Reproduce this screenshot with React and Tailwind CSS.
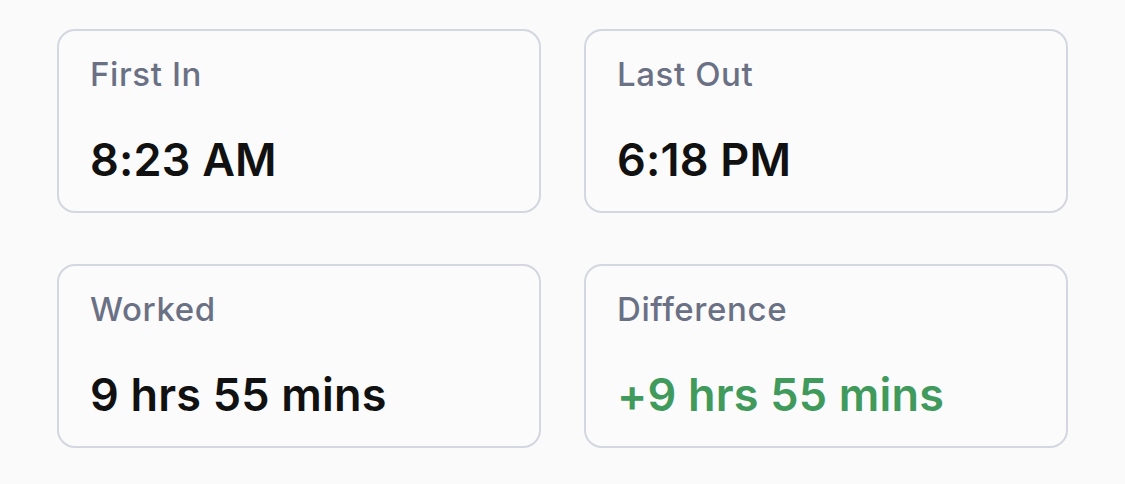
const stats = [
  { label: "First In", value: "8:23 AM" },
  { label: "Last Out", value: "6:18 PM" },
  { label: "Worked", value: "9 hrs 55 mins" },
  { label: "Difference", value: "+9 hrs 55 mins", positive: true },
];

export default function App() {
  return (
    <div className="min-h-[484px] w-full bg-[#fafafa] font-['Inter','Noto_Sans',sans-serif]">
      <div className="grid grid-cols-2 gap-x-[43px] gap-y-[51px] px-[57px] pt-[29px]">
        {stats.map((s) => (
          <div
            key={s.label}
            className="flex h-[184px] flex-col rounded-[18px] border-2 border-[#d4d6e0] bg-[#fbfbfc] px-[31px] pt-[23px]"
          >
            <div className="text-[33px] leading-[40px] font-medium tracking-[0.6px] text-[#6b7185]">
              {s.label}
            </div>
            <div
              className={
                "mt-[39px] text-[45px] leading-[54px] font-semibold tracking-[0.2px] " +
                (s.positive ? "text-[#3f9a5c]" : "text-[#111111]")
              }
            >
              {s.value}
            </div>
          </div>
        ))}
      </div>
    </div>
  );
}
